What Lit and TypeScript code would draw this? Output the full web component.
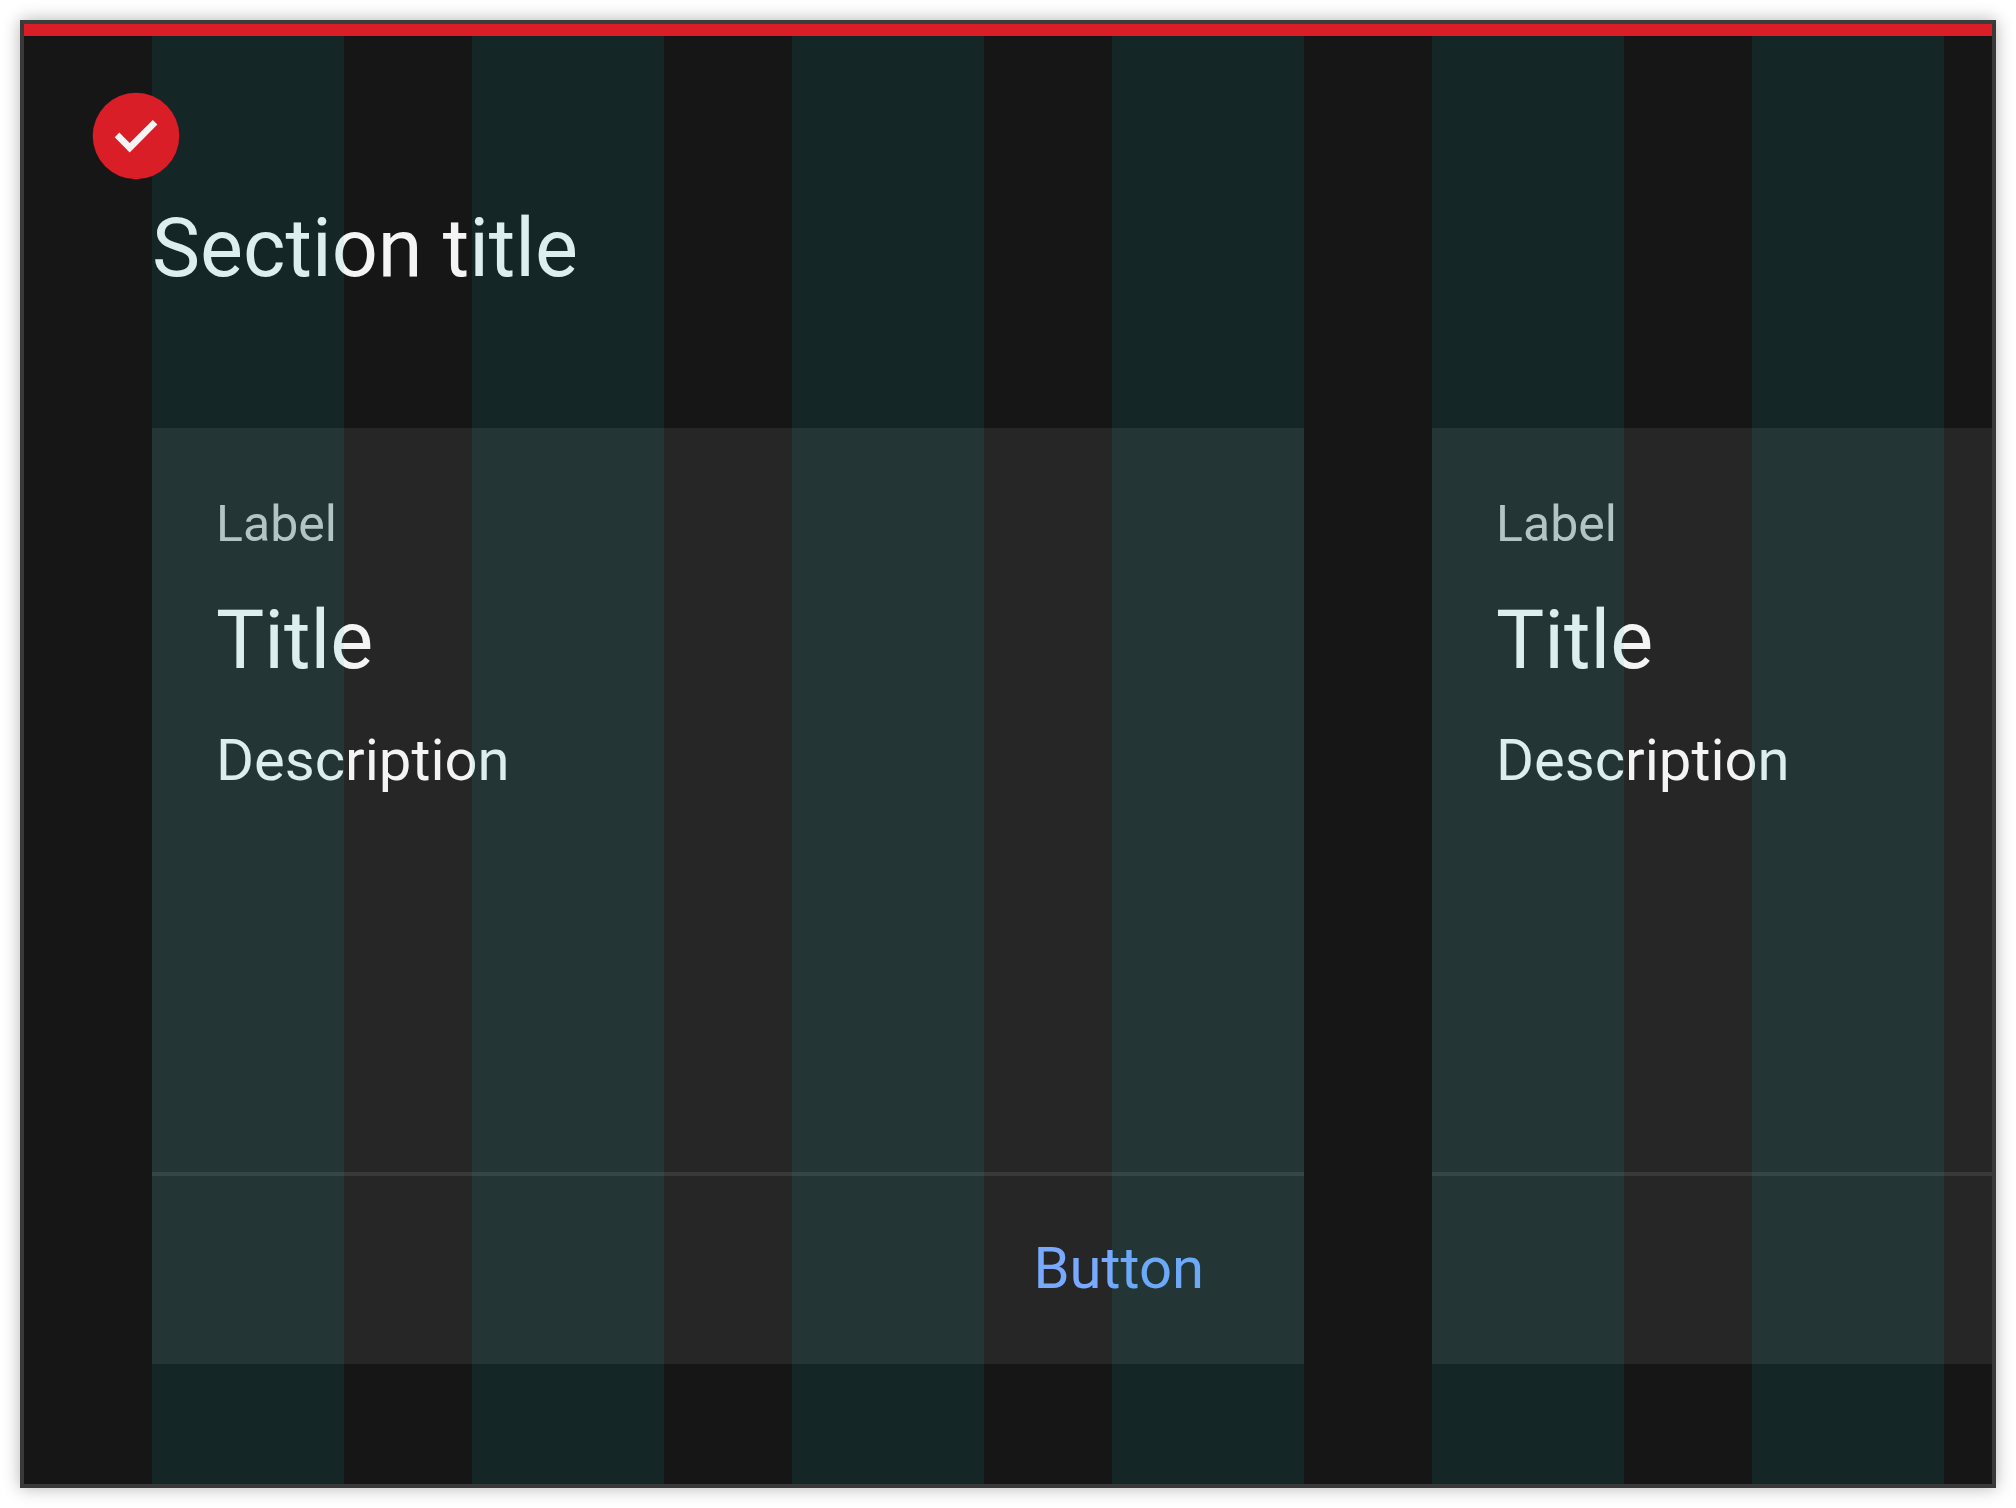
import { LitElement, html, css, svg, nothing } from "lit";
import { customElement, property } from "lit/decorators.js";

const COLUMN_COUNT = 6;

@customElement("status-badge")
export class StatusBadge extends LitElement {
  static styles = css`
    :host {
      display: block;
      width: 86px;
      height: 86px;
    }
    .icon {
      display: block;
      width: 100%;
      height: 100%;
      overflow: visible;
    }
    .disc {
      fill: #da1e28;
    }
    .tick {
      fill: #f4f4f4;
    }
  `;

  render() {
    return html`
      <svg class="icon" viewBox="0 0 86 86" role="img" aria-label="Done">
        ${svg`
          <circle class="disc" cx="43" cy="43" r="43.3"></circle>
          <path class="tick" d="M21.7 44.2 26.3 39.6 36.7 50 59.8 26.9 64.4 31.6 36.7 59.6Z"></path>
        `}
      </svg>
    `;
  }
}

@customElement("content-card")
export class ContentCard extends LitElement {
  @property() label = "";
  @property() heading = "";
  @property() description = "";
  @property() action = "";

  static styles = css`
    :host {
      display: flex;
      flex-direction: column;
      min-width: 0;
      background: #262626;
      color: #f4f4f4;
    }
    .body {
      flex: 1;
      min-height: 744px;
      box-sizing: border-box;
      padding: 64px;
    }
    .label {
      margin: 0 0 29px;
      font-size: 50px;
      line-height: 64px;
      color: #c6c6c6;
    }
    .heading {
      margin: 0 0 23px;
      font-size: 81px;
      line-height: 112px;
      font-weight: 400;
    }
    .description {
      margin: 0;
      font-size: 58px;
      line-height: 80px;
    }
    .actions {
      display: flex;
      justify-content: flex-end;
      align-items: flex-start;
      box-sizing: border-box;
      min-height: 192px;
      padding: 52px 100px 56px 64px;
      border-top: 4px solid #393939;
    }
    .action {
      margin: 0;
      padding: 0;
      border: 0;
      background: none;
      color: #78a9ff;
      font: inherit;
      font-size: 58px;
      line-height: 80px;
      cursor: pointer;
    }
  `;

  render() {
    return html`
      <div class="body">
        <p class="label">${this.label}</p>
        <h2 class="heading">${this.heading}</h2>
        <p class="description">${this.description}</p>
      </div>
      <div class="actions">
        ${this.action
          ? html`<button class="action" type="button">${this.action}</button>`
          : nothing}
      </div>
    `;
  }
}

@customElement("app-root")
export class AppRoot extends LitElement {
  static styles = css`
    :host {
      display: block;
      box-sizing: border-box;
      min-height: 100vh;
      padding: 20px;
      background: #ffffff;
      font-family: Roboto, "Liberation Sans", sans-serif;
    }
    .frame {
      position: relative;
      box-sizing: border-box;
      min-height: calc(100vh - 40px);
      border: 4px solid #393939;
      border-top-color: #393e3c;
      background: #161616;
      color: #f4f4f4;
      overflow: hidden;
      box-shadow: 0 0 16px rgba(0, 0, 0, 0.3);
    }
    .accent {
      height: 12px;
      background: #da1e28;
    }
    .grid {
      display: grid;
      grid-template-columns: repeat(6, minmax(0, 1fr));
      column-gap: 128px;
      padding: 0 48px 0 128px;
    }
    .title {
      grid-column: 1 / -1;
      margin: 157px 0 123px;
      font-size: 81px;
      line-height: 112px;
      font-weight: 400;
    }
    .wide {
      grid-column: 1 / span 4;
    }
    .bleed {
      grid-column: 5 / -1;
      margin-right: -48px;
    }
    .overlay {
      position: absolute;
      inset: 12px 0 0;
      pointer-events: none;
    }
    .column {
      background: rgba(8, 189, 186, 0.1);
    }
    .badge {
      position: absolute;
      top: 69px;
      left: 69px;
    }
  `;

  render() {
    return html`
      <main class="frame">
        <div class="accent"></div>
        <section class="grid">
          <h1 class="title">Section title</h1>
          <content-card
            class="wide"
            label="Label"
            heading="Title"
            description="Description"
            action="Button"
          ></content-card>
          <content-card
            class="bleed"
            label="Label"
            heading="Title"
            description="Description"
          ></content-card>
        </section>
        <div class="grid overlay" aria-hidden="true">
          ${Array.from({ length: COLUMN_COUNT }, () => html`<div class="column"></div>`)}
        </div>
        <status-badge class="badge"></status-badge>
      </main>
    `;
  }
}
